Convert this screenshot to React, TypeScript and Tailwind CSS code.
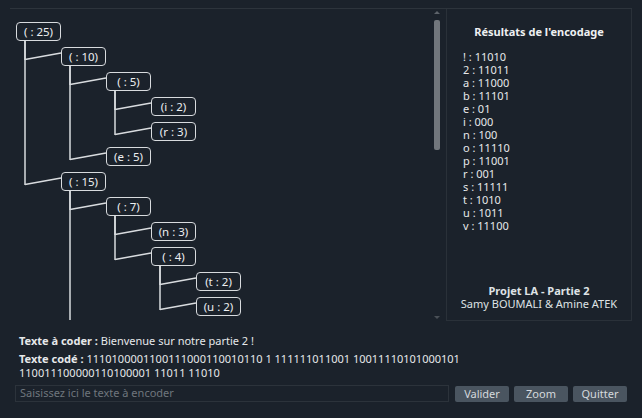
import React from "react";

type TreeNode = { label: string; col: number; row: number; parent?: number };

// huffman tree as it shows in the scroll area (last child is cut off by the panel)
const NODES: TreeNode[] = [
  { label: "( : 25)", col: 0, row: 0 },
  { label: "( : 10)", col: 1, row: 1, parent: 0 },
  { label: "( : 5)", col: 2, row: 2, parent: 1 },
  { label: "(i : 2)", col: 3, row: 3, parent: 2 },
  { label: "(r : 3)", col: 3, row: 4, parent: 2 },
  { label: "(e : 5)", col: 2, row: 5, parent: 1 },
  { label: "( : 15)", col: 1, row: 6, parent: 0 },
  { label: "( : 7)", col: 2, row: 7, parent: 6 },
  { label: "(n : 3)", col: 3, row: 8, parent: 7 },
  { label: "( : 4)", col: 3, row: 9, parent: 7 },
  { label: "(t : 2)", col: 4, row: 10, parent: 9 },
  { label: "(u : 2)", col: 4, row: 11, parent: 9 },
  { label: "( : 8)", col: 2, row: 12, parent: 6 },
];

const CODES = [
  "! : 11010",
  "2 : 11011",
  "a : 11000",
  "b : 11101",
  "e : 01",
  "i : 000",
  "n : 100",
  "o : 11110",
  "p : 11001",
  "r : 001",
  "s : 11111",
  "t : 1010",
  "u : 1011",
  "v : 11100",
];

const BOX_W = 45;
const BOX_H = 19;
const nx = (n: TreeNode) => 6 + n.col * 45;
const ny = (n: TreeNode) => 13 + n.row * 25;

function Tree() {
  return (
    <div className="relative w-[436px] h-[311px] overflow-hidden">
      <svg className="absolute left-0 top-0" width={436} height={340}>
        {NODES.map((n, i) => {
          if (n.parent === undefined) return null;
          const p = NODES[n.parent];
          const vx = nx(p) + 9;
          const cy = ny(n) + BOX_H / 2;
          return (
            <g key={i} stroke="#d9dcdf" strokeWidth={1.5} fill="none">
              <line x1={vx} y1={ny(p) + BOX_H} x2={vx} y2={cy + 3.5} />
              <line x1={vx} y1={cy + 3} x2={nx(n)} y2={cy - 3.5} />
            </g>
          );
        })}
      </svg>
      {NODES.map((n, i) => (
        <div
          key={i}
          className="absolute flex items-center justify-center rounded-[4px] border-[1.5px] border-[#d8dbde] bg-[#1b222b] text-[11.5px] leading-[14px] text-[#eceef0]"
          style={{ left: nx(n), top: ny(n), width: BOX_W, height: BOX_H }}
        >
          {n.label}
        </div>
      ))}

      {/* scrollbar */}
      <div className="absolute left-[423px] top-[2px] h-[308px] w-[7px] flex flex-col items-center">
        <div className="w-0 h-0 border-l-[3px] border-r-[3px] border-b-[3px] border-l-transparent border-r-transparent border-b-[#5d636a]" />
        <div className="mt-[6px] h-[130px] w-[6px] rounded-[2px] bg-[#71767c]" />
        <div className="flex-1" />
        <div className="w-0 h-0 border-l-[3px] border-r-[3px] border-t-[3px] border-l-transparent border-r-transparent border-t-[#4a5057]" />
      </div>
    </div>
  );
}

export default function App() {
  return (
    <div
      className="w-[642px] h-[418px] overflow-hidden bg-[#1b222b] text-[#e6e8ea] text-[11px] pt-2"
      style={{ fontFamily: '"Noto Sans", "Open Sans", sans-serif' }}
    >
      <div className="mx-[10px] flex border-t border-[#2d343c]">
        <Tree />
        <div className="flex-1 flex flex-col border-l border-r border-b border-[#2a3139] h-[312px] pt-[16px] pb-[10px]">
          <div className="text-center font-bold leading-[14px] text-[#eef0f2]">
            Résultats de l'encodage
          </div>
          <div className="mt-[11px] pl-[16px] leading-[13px]">
            {CODES.map((c) => (
              <div key={c}>{c}</div>
            ))}
          </div>
          <div className="flex-1" />
          <div className="text-center leading-[13px] text-[#dfe2e5]">
            <div className="font-bold">Projet LA - Partie 2</div>
            <div>Samy BOUMALI &amp; Amine ATEK</div>
          </div>
        </div>
      </div>

      <div className="px-[19px] pt-[13px] leading-[14px]">
        <div>
          <span className="font-bold">Texte à coder : </span>
          Bienvenue sur notre partie 2 !
        </div>
        <div className="mt-[4px] w-[470px]">
          <span className="font-bold">Texte codé : </span>
          1110100001100111000110010110 1 111111011001 10011110101000101
          110011100000110100001 11011 11010
        </div>
      </div>

      <div className="flex items-center pl-[15px] mt-[5px] gap-[5px]">
        <div className="w-[434px] h-[17px] border border-[#2c333b] flex items-center px-[4px] text-[#6f767d]">
          Saisissez ici le texte à encoder
        </div>
        <div className="ml-[1px] flex gap-[5px]">
          {["Valider", "Zoom", "Quitter"].map((b) => (
            <button
              key={b}
              className="w-[54px] h-[16px] rounded-[2px] bg-[#4a5560] text-[#d5d9dd] text-[11px] leading-[16px]"
            >
              {b}
            </button>
          ))}
        </div>
      </div>
    </div>
  );
}
